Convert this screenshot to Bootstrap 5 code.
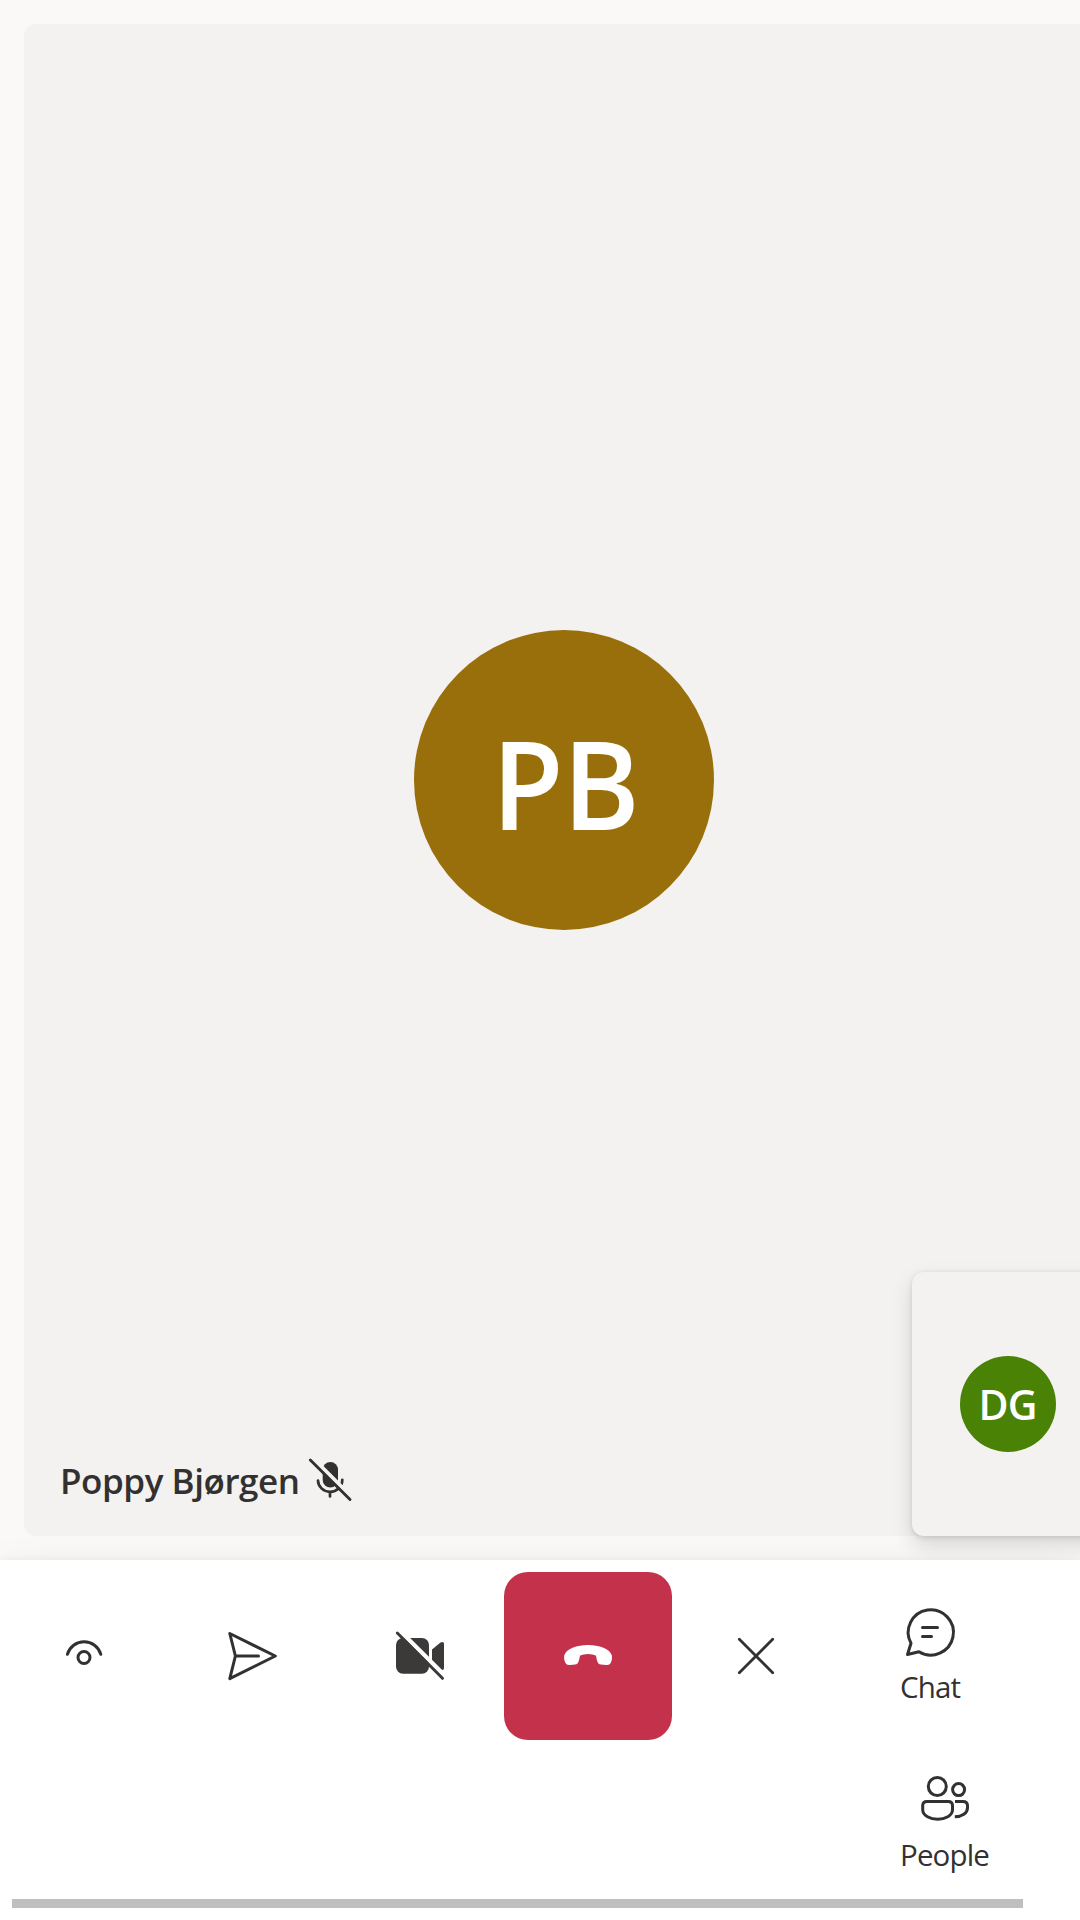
<!DOCTYPE html>
<html lang="en">
<head>
<meta charset="utf-8">
<meta name="viewport" content="width=device-width, initial-scale=1">
<title>Call</title>
<link href="https://cdn.jsdelivr.net/npm/bootstrap@5.3.0/dist/css/bootstrap.min.css" rel="stylesheet">
<style>
body{font-family:"Open Sans","Noto Sans",sans-serif;color:#323130;background:#fff}
.stage{height:1560px;padding:24px;background:#faf9f8}
.video-tile{width:1080px;height:1512px;border-radius:12px;background:#f3f2f1}
.avatar{border-radius:50%;color:#fff;font-weight:600;line-height:1}
.avatar-xl{width:300px;height:300px;background:#986f0b;font-size:123px}
.avatar-sm{width:96px;height:96px;background:#498205;font-size:41px}
.avatar-xl span{padding:5px 0 0 2px;letter-spacing:-1px;transform:scaleX(.95)}
.avatar-sm span{letter-spacing:-1px;padding-right:1px}
.name-tag{left:36px;bottom:28px;height:54px}
.name-tag span{font-size:35px;font-weight:600;line-height:54px;letter-spacing:-.45px}
.name-tag svg{margin-bottom:5px}
.self-view{left:912px;top:1272px;width:192px;height:264px;border-radius:12px;background:#f3f2f1;box-shadow:0 9.6px 21.6px rgba(0,0,0,.132),0 1.8px 5.4px rgba(0,0,0,.108)}
.call-bar{height:360px;padding-top:12px;background:#fff;box-shadow:0 19.2px 43.2px rgba(0,0,0,.132),0 3.6px 10.8px rgba(0,0,0,.108)}
.call-btn{width:168px;height:168px;padding:0;border:0;border-radius:24px;color:#323130}
.hang-up,.hang-up:hover{background:#c4314b;color:#fff}
.side-btn{height:168px;padding:0;border:0;border-radius:0;color:#323130;font-size:29.5px;line-height:40px;letter-spacing:-.85px}
.side-col{padding-left:60px}
.side-btn svg{margin:36px 0 11px}
.scroll-thumb{left:12px;bottom:12px;width:1011px;height:9px;background:#bfbfbf}
svg{display:block;overflow:visible}
.stroked{fill:none;stroke:currentColor;stroke-width:3;stroke-linecap:round;stroke-linejoin:round}
</style>
<script src="https://cdn.jsdelivr.net/npm/bootstrap@5.3.0/dist/js/bootstrap.bundle.min.js"></script>
</head>
<body class="overflow-hidden">
<main class="stage position-relative">
  <section class="video-tile position-relative d-flex align-items-center justify-content-center">
    <div class="avatar avatar-xl d-flex align-items-center justify-content-center"><span>PB</span></div>
    <div class="name-tag position-absolute d-flex align-items-center">
      <span id="participant">Poppy Bjørgen</span>
      <svg class="ms-2" width="44" height="44" viewBox="308 1456 44 44" aria-label="Muted">
        <mask id="micCut" maskUnits="userSpaceOnUse" x="300" y="1450" width="60" height="60"><path fill="#fff" d="M300 1450h60v60h-60z"/><path d="M312.500 1457L354 1498.500" stroke="#000" stroke-width="4"/></mask>
        <g mask="url(#micCut)"><rect x="322.700" y="1461" width="15.300" height="25.500" rx="7.600" fill="currentColor"/><path class="stroked" style="stroke-width:2.700" d="M318 1479.500c0 6 5.300 11.300 12 11.300s12.300-4.800 12.300-12M330 1491v4.500"/></g>
        <path class="stroked" style="stroke-width:2.900" d="M310.300 1459L350 1498.500"/>
      </svg>
    </div>
  </section>
  <aside class="self-view position-absolute d-flex align-items-center justify-content-center">
    <div class="avatar avatar-sm d-flex align-items-center justify-content-center"><span>DG</span></div>
  </aside>
</main>
<footer class="call-bar position-relative d-flex align-items-start">
  <button class="btn call-btn d-flex align-items-center justify-content-center" aria-label="Watch">
    <svg class="stroked" width="60" height="60" viewBox="0 0 60 60"><path d="M13.400 28.300a17.400 17.400 0 0 1 33.400 0"/><circle cx="30" cy="31.500" r="6"/></svg>
  </button>
  <button class="btn call-btn d-flex align-items-center justify-content-center" aria-label="Send">
    <svg class="stroked" width="60" height="60" viewBox="0 0 60 60"><path d="M7.800 7.500L53.300 30 7.800 52.700 13.400 30zM13.400 30h23.100"/></svg>
  </button>
  <button class="btn call-btn d-flex align-items-center justify-content-center" aria-label="Camera off">
    <svg width="60" height="60" viewBox="390 1626 60 60" color="#3b3a39">
      <mask id="camCut" maskUnits="userSpaceOnUse" x="390" y="1626" width="60" height="60"><path fill="#fff" d="M390 1626h60v60h-60z"/><path d="M397 1628L449 1680" stroke="#000" stroke-width="4.500"/></mask>
      <g mask="url(#camCut)" fill="currentColor"><rect x="396" y="1638" width="33" height="35.700" rx="7"/><path d="M432 1649.500l8.500-7q3.500-1.500 3.500 1.500v24q0 3-3.500 1.500l-8.500-7z"/></g>
      <path class="stroked" d="M397.300 1633L442.500 1678.300"/>
    </svg>
  </button>
  <button class="btn call-btn hang-up d-flex align-items-center justify-content-center" aria-label="Hang up">
    <svg width="60" height="60" viewBox="558 1626 60 60" fill="currentColor"><path d="M588 1645C577 1645 566 1649 564.200 1655.500C563.700 1659 564.700 1662.500 566.500 1664.300Q567.500 1665.200 570 1665L575 1664.600C579.500 1664.500 579 1658 580.200 1655.600Q583 1653.900 588 1653.900T595.800 1655.600C597 1658 596.500 1664.500 601 1664.600L606 1665Q608.500 1665.200 609.700 1664.300C611.500 1662.500 612.400 1659 611.900 1655.500C610.200 1649 599 1645 588 1645Z"/></svg>
  </button>
  <button class="btn call-btn d-flex align-items-center justify-content-center" aria-label="Close">
    <svg class="stroked" style="stroke-width:2.700" width="60" height="60" viewBox="0 0 60 60"><path d="M13.300 13.300l33.400 33.400M46.700 13.300L13.300 46.700"/></svg>
  </button>
  <div class="side-col d-flex flex-column align-items-start">
    <button class="btn side-btn d-flex flex-column align-items-center">
      <svg class="stroked" width="48" height="48" viewBox="906 1608 48 48"><path d="M911 1643.300A22.600 22.600 0 1 1 919 1651.700L907.500 1654.500z"/><path d="M922.500 1627.500H937.500M922.500 1636.500H931.500"/></svg>
      <span>Chat</span>
    </button>
    <button class="btn side-btn d-flex flex-column align-items-center">
      <svg class="stroked" width="48" height="48" viewBox="921 1776 48 48"><circle cx="937.300" cy="1786.500" r="9"/><circle cx="958.600" cy="1789.600" r="6"/><path d="M927 1801.500h21.300q4.200 0 4.200 4.200v4c0 6-7.500 9.500-14.800 9.500s-15-3.500-15-9.500v-4q0-4.200 4.300-4.200z"/><path stroke-linecap="butt" d="M955 1801.500h8q4.500 0 4.500 4.200v2c0 5.500-5.500 9-12.700 9" /></svg>
      <span>People</span>
    </button>
  </div>
  <div class="scroll-thumb position-absolute"></div>
</footer>
</body>
</html>
